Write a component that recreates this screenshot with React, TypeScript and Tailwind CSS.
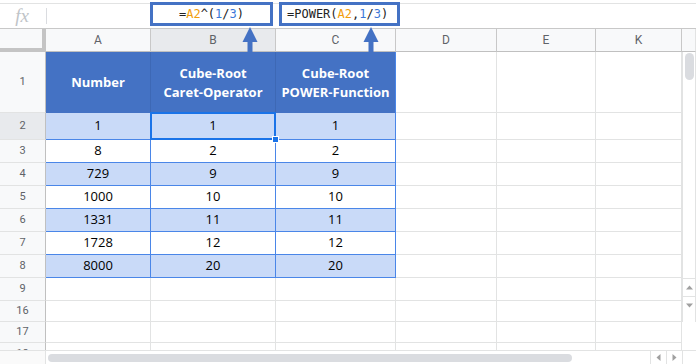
import React from "react";

const GRID = "grid grid-cols-[46px_105px_125px_120px_101px_99px_86px]";

const data: [string, string, string][] = [
  ["1", "1", "1"],
  ["8", "2", "2"],
  ["729", "9", "9"],
  ["1000", "10", "10"],
  ["1331", "11", "11"],
  ["1728", "12", "12"],
  ["8000", "20", "20"],
];

function RowNum({ n, selected }: { n: string; selected?: boolean }) {
  return (
    <div
      className={`flex items-center justify-center border-r border-r-[#c0c0c0] border-b border-b-[#e2e3e3] text-[11px] text-[#5f6368] ${
        selected ? "bg-[#e8eaed]" : "bg-[#f8f9fa]"
      }`}
      style={{ fontFamily: "Roboto, Arial, sans-serif" }}
    >
      {n}
    </div>
  );
}

function Empty() {
  return <div className="border-r border-b border-[#e2e3e3] bg-white" />;
}

function Arrow({ x }: { x: number }) {
  return (
    <svg
      className="absolute top-[27px] z-20"
      style={{ left: x - 8 }}
      width="16"
      height="26"
      viewBox="0 0 16 26"
    >
      <polygon points="8,0 15.5,15 0.5,15" fill="#4472c4" />
      <rect x="5.5" y="14" width="5" height="12" fill="#4472c4" />
    </svg>
  );
}

export default function App() {
  const font = { fontFamily: "'Open Sans', Roboto, Arial, sans-serif" };
  return (
    <div
      className="relative w-[696px] h-[364px] overflow-hidden bg-white"
      style={font}
    >
      {/* formula bar */}
      <div className="h-[26px] border-t border-t-[#e2e3e3] mt-[3px] border-b border-b-[#c8c8c8] flex items-center">
        <div className="w-[46px] flex items-center justify-center">
          <span
            className="italic text-[19px] text-[#c0c4c8] ml-[-2px]"
            style={{ fontFamily: "'Liberation Serif', serif" }}
          >
            fx
          </span>
        </div>
        <div className="h-[16px] w-px bg-[#dadce0]" />
      </div>

      {/* column header row */}
      <div className="flex">
        <div className={`${GRID} h-[23px]`}>
          <div className="bg-[#f8f9fa] border-r-[4px] border-r-[#c4c4c4] border-b-[4px] border-b-[#c4c4c4]" />
          {["A", "B", "C", "D", "E", "K"].map((c) => (
            <div
              key={c}
              className={`flex items-center justify-center text-[12px] text-[#5f6368] border-r border-r-[#c8c8c8] border-b border-b-[#c0c0c0] ${
                c === "B" ? "bg-[#e8eaed]" : "bg-[#f8f9fa]"
              }`}
              style={{ fontFamily: "Roboto, Arial, sans-serif" }}
            >
              {c}
            </div>
          ))}
        </div>
        <div className="w-[14px] h-[23px] bg-[#f8f9fa] border-b border-b-[#c0c0c0] border-r border-r-[#e2e3e3]" />
      </div>

      {/* body */}
      <div className="flex">
        <div className="flex flex-col w-[682px]">
          {/* row 1 header */}
          <div className={`${GRID} h-[61px]`}>
            <RowNum n="1" />
            {["Number", "Cube-Root\nCaret-Operator", "Cube-Root\nPOWER-Function"].map(
              (t, i) => (
                <div
                  key={i}
                  className={`flex items-center justify-center text-center whitespace-pre-line bg-[#4472c4] text-white font-bold text-[13px] leading-[19px] ${
                    i < 2 ? "border-r border-r-[#3d68b5]" : "border-r border-r-[#4a86e8]"
                  }`}
                >
                  {t}
                </div>
              )
            )}
            <Empty />
            <Empty />
            <Empty />
          </div>

          {data.map((r, idx) => {
            const shaded = idx % 2 === 0;
            const h = idx === 0 ? "h-[27px]" : "h-[23px]";
            return (
              <div key={idx} className={`${GRID} ${h}`}>
                <RowNum n={String(idx + 2)} selected={idx === 0} />
                {r.map((v, j) => (
                  <div
                    key={j}
                    className={`relative flex items-center justify-center text-[13px] text-black border-r border-b border-[#4a86e8] ${
                      shaded ? "bg-[#c9daf8]" : "bg-white"
                    } ${idx === 0 && j === 1 ? "z-10" : ""}`}
                  >
                    {v}
                    {idx === 0 && j === 1 && (
                      <>
                        <div className="absolute left-[-1px] top-[-1px] right-[-1px] bottom-[-1px] border-2 border-[#1a73e8]" />
                        <div className="absolute right-[-4px] bottom-[-4px] w-[7px] h-[7px] bg-[#1a73e8] border border-white" />
                      </>
                    )}
                  </div>
                ))}
                <Empty />
                <Empty />
                <Empty />
              </div>
            );
          })}

          {[
            ["9", "h-[23px]"],
            ["16", "h-[21px]"],
            ["17", "h-[21px]"],
          ].map(([n, h]) => (
            <div key={n} className={`${GRID} ${h}`}>
              <RowNum n={n} />
              <Empty />
              <Empty />
              <Empty />
              <Empty />
              <Empty />
              <Empty />
            </div>
          ))}
          <div className={`${GRID} h-[21px]`}>
            <div className="flex justify-center pt-[3px] bg-[#f8f9fa] border-r border-r-[#c0c0c0] text-[11px] text-[#5f6368]" style={{ fontFamily: "Roboto, Arial, sans-serif" }}>
              18
            </div>
            <Empty />
            <Empty />
            <Empty />
            <Empty />
            <Empty />
            <Empty />
          </div>
        </div>

        {/* vertical scrollbar */}
        <div className="w-[14px] h-[270px] flex flex-col items-center border-l border-l-[#e2e3e3] border-r border-r-[#e2e3e3] bg-white">
          <div className="mt-[1px] w-[9px] h-[27px] rounded-full bg-[#dadce0]" />
          <div className="flex-1" />
          <div className="w-full h-[18px] flex items-center justify-center border-t border-[#e2e3e3]">
            <svg width="7" height="5" viewBox="0 0 7 5">
              <polygon points="3.5,0.5 7,4.5 0,4.5" fill="#a0a0a0" />
            </svg>
          </div>
          <div className="w-full h-[18px] flex items-center justify-center border-t border-[#e2e3e3]">
            <svg width="7" height="5" viewBox="0 0 7 5">
              <polygon points="0,0.5 7,0.5 3.5,4.5" fill="#a0a0a0" />
            </svg>
          </div>
          <div className="h-[8px]" />
        </div>
      </div>

      {/* horizontal scrollbar */}
      <div className="absolute left-0 top-[350px] w-[696px] h-[14px] flex items-center bg-white border-t border-t-[#e2e3e3] z-20">
        <div className="w-[46px] h-full border-r border-r-[#e2e3e3] bg-[#fafafa]" />
        <div className="flex-1 h-full flex items-center pl-[2px]">
          <div className="w-[524px] h-[8px] rounded-full bg-[#dadce0]" />
        </div>
        <div className="w-[16px] h-full flex items-center justify-center border-l border-[#e2e3e3]">
          <svg width="5" height="7" viewBox="0 0 5 7">
            <polygon points="0.5,3.5 4.5,0 4.5,7" fill="#a0a0a0" />
          </svg>
        </div>
        <div className="w-[16px] h-full flex items-center justify-center border-l border-[#e2e3e3]">
          <svg width="5" height="7" viewBox="0 0 5 7">
            <polygon points="0.5,0 4.5,3.5 0.5,7" fill="#a0a0a0" />
          </svg>
        </div>
        <div className="w-[14px] h-full border-l border-[#e2e3e3]" />
      </div>

      {/* formula callout boxes */}
      <div
        className="absolute left-[150px] top-[2px] w-[123px] h-[24px] border-[3px] border-[#4472c4] bg-white flex items-center justify-center text-[12px] text-[#222] z-20"
        style={{ fontFamily: "'DejaVu Sans Mono', 'Liberation Mono', monospace" }}
      >
        <span>
          =<span className="text-[#f29d0c]">A2</span>^(
          <span className="text-[#3c78d8]">1</span>/
          <span className="text-[#3c78d8]">3</span>)
        </span>
      </div>
      <div
        className="absolute left-[279px] top-[2px] w-[121px] h-[24px] border-[3px] border-[#4472c4] bg-white flex items-center pl-[5px] text-[12px] text-[#222] z-20"
        style={{ fontFamily: "'DejaVu Sans Mono', 'Liberation Mono', monospace" }}
      >
        <span>
          =POWER(<span className="text-[#f29d0c]">A2</span>,
          <span className="text-[#3c78d8]">1</span>/
          <span className="text-[#3c78d8]">3</span>)
        </span>
      </div>

      <Arrow x={250} />
      <Arrow x={371} />
    </div>
  );
}
